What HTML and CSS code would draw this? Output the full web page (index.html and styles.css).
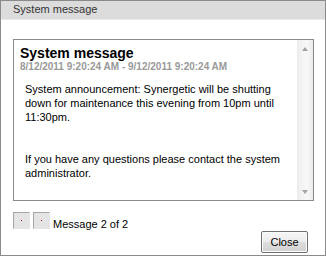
FILE: index.html
```html
<!DOCTYPE html>
<html lang="en">
<head>
    <meta charset="UTF-8">
    <title>System message</title>
    <link rel="stylesheet" href="styles.css">
</head>
<body>
    <div class="dialog">
        <div class="dialog-title">System message</div>

        <div class="dialog-body">
            <div class="message-box">
                <div class="message-content">
                    <h2 class="message-title">System message</h2>
                    <div class="message-date">8/12/2011 9:20:24 AM - 9/12/2011 9:20:24 AM</div>
                    <div class="message-text">
                        <p>System announcement: Synergetic will be shutting down for maintenance this evening from 10pm until 11:30pm.</p>
                        <p>If you have any questions please contact the system administrator.</p>
                    </div>
                </div>
                <div class="scrollbar">
                    <div class="scroll-arrow"><span class="arrow-up"></span></div>
                    <div class="scroll-track"></div>
                    <div class="scroll-arrow"><span class="arrow-down"></span></div>
                </div>
            </div>

            <div class="pager">
                <button class="pager-button" aria-label="Previous"><span class="dot"></span></button>
                <button class="pager-button" aria-label="Next"><span class="dot"></span></button>
                <span class="pager-text">Message 2 of 2</span>
            </div>

            <div class="dialog-footer">
                <button class="close-button">Close</button>
            </div>
        </div>
    </div>
</body>
</html>
```

FILE: styles.css
```css
*, *::before, *::after {
    box-sizing: border-box;
}

body {
    margin: 0;
    background-color: #ffffff;
    font-family: "Liberation Sans", Arial, sans-serif;
    font-size: 11px;
    color: #000;
}

.dialog {
    width: 326px;
    height: 256px;
    border: 1px solid #8a8a8a;
    background-color: #fff;
}

.dialog-title {
    height: 19px;
    padding-left: 12px;
    line-height: 17px;
    color: #333;
    background-color: #dcdcdc;
    border-bottom: 1px solid #ebebeb;
}

.dialog-body {
    padding: 19px 11px 0 12px;
}

/* Caja del mensaje con su barra de desplazamiento */
.message-box {
    display: flex;
    height: 162px;
    border: 1px solid #8a8a8a;
}
.message-content {
    flex: 1;
    padding: 5px 6px 0;
    overflow: hidden;
}
.message-title {
    margin: 0;
    font-size: 14px;
    line-height: 16px;
    font-weight: bold;
}
.message-date {
    font-size: 10px;
    line-height: 11px;
    font-weight: bold;
    color: #999;
}
.message-text {
    margin-top: 10px;
    padding-left: 5px;
    line-height: 14px;
}
.message-text p {
    margin: 0;
}
.message-text p + p {
    margin-top: 28px;
}

.scrollbar {
    width: 16px;
    display: flex;
    flex-direction: column;
    background: linear-gradient(to right, #ececec, #f3f3f3 30%, #f8f8f8 60%, #f1f1f1 85%, #e9e9e9);
}
.scroll-arrow {
    height: 17px;
    display: flex;
    align-items: center;
    justify-content: center;
}
.scroll-track {
    flex: 1;
}
.arrow-up,
.arrow-down {
    width: 0;
    height: 0;
    border-left: 3px solid transparent;
    border-right: 3px solid transparent;
}
.arrow-up {
    border-bottom: 4px solid #a3a3a3;
}
.arrow-down {
    border-top: 4px solid #a3a3a3;
}

/* Paginación */
.pager {
    display: flex;
    align-items: flex-end;
    margin-top: 11px;
    height: 17px;
}
.pager-button {
    width: 17px;
    height: 17px;
    padding: 0;
    margin-right: 3px;
    display: flex;
    align-items: center;
    justify-content: center;
    background-color: #e4e4e4;
    border: 1px solid;
    border-color: #a5a5a5 #e4e4e4 #e4e4e4 #a5a5a5;
    cursor: pointer;
}
.pager-button .dot {
    width: 1px;
    height: 1px;
    background-color: #d40000;
}
.pager-text {
    line-height: 9px;
    color: #000;
}

.dialog-footer {
    display: flex;
    justify-content: flex-end;
    margin-top: 2px;
    padding-right: 6px;
}
.close-button {
    width: 47px;
    height: 22px;
    padding: 0;
    font-family: "Liberation Sans", Arial, sans-serif;
    font-size: 11px;
    color: #000;
    border: 1px solid #707070;
    border-radius: 2px;
    background: linear-gradient(#f6f6f6, #ececec 50%, #dddddd 51%, #d2d2d2);
    box-shadow: inset 0 0 0 1px #fbfbfb;
    cursor: pointer;
}
```
